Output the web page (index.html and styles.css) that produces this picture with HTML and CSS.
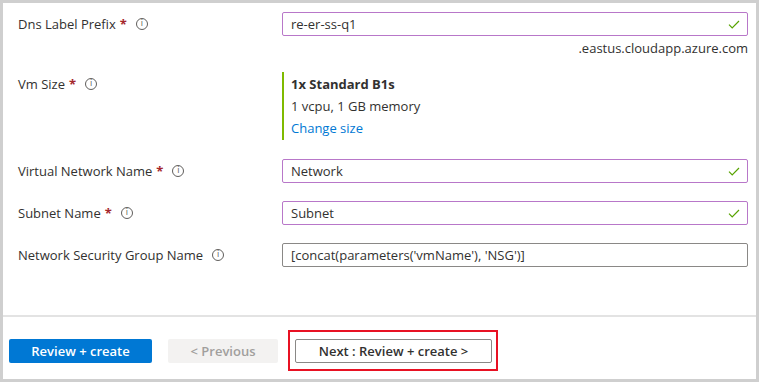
FILE: index.html
```html
<!DOCTYPE html>
<html lang="en">
<head>
<meta charset="utf-8">
<link rel="stylesheet" href="styles.css">
</head>
<body>
<div class="frame">
  <div class="form">
    <div class="row row-dns">
      <div class="label">Dns Label Prefix <span class="req">*</span> <span class="info">i</span></div>
      <div class="field">
        <div class="input valid">re-er-ss-q1<svg class="check" viewBox="0 0 12 9"><path d="M1 4.6 L4.2 7.8 L11 1" /></svg></div>
        <div class="suffix">.eastus.cloudapp.azure.com</div>
      </div>
    </div>
    <div class="row row-vm">
      <div class="label label-vm">Vm Size <span class="req">*</span> <span class="info">i</span></div>
      <div class="field">
        <div class="size">
          <div class="size-name">1x Standard B1s</div>
          <div class="size-desc">1 vcpu, 1 GB memory</div>
          <a class="size-link" href="#">Change size</a>
        </div>
      </div>
    </div>
    <div class="row row-vnet">
      <div class="label">Virtual Network Name <span class="req">*</span> <span class="info">i</span></div>
      <div class="field">
        <div class="input valid">Network<svg class="check" viewBox="0 0 12 9"><path d="M1 4.6 L4.2 7.8 L11 1" /></svg></div>
      </div>
    </div>
    <div class="row row-subnet">
      <div class="label">Subnet Name <span class="req">*</span> <span class="info">i</span></div>
      <div class="field">
        <div class="input valid">Subnet<svg class="check" viewBox="0 0 12 9"><path d="M1 4.6 L4.2 7.8 L11 1" /></svg></div>
      </div>
    </div>
    <div class="row row-nsg">
      <div class="label">Network Security Group Name <span class="info">i</span></div>
      <div class="field">
        <div class="input">[concat(parameters('vmName'), 'NSG')]</div>
      </div>
    </div>
  </div>
  <div class="footer">
    <button class="btn btn-primary">Review + create</button>
    <button class="btn btn-disabled">&lt; Previous</button>
    <div class="highlight">
      <button class="btn btn-default">Next : Review + create &gt;</button>
    </div>
  </div>
</div>
</body>
</html>
```
FILE: styles.css
```css
* { box-sizing: border-box; }
html, body { margin: 0; padding: 0; background: #ffffff; }
body {
  font-family: "Open Sans", "Noto Sans", sans-serif;
  font-size: 13px;
  color: #323130;
  width: 761px;
  height: 385px;
  overflow: hidden;
}
.frame {
  width: 759px;
  height: 382px;
  border: 3px solid #cfcfcf;
  background: #fff;
  display: flex;
  flex-direction: column;
}
.form {
  height: 314px;
  padding: 9px 8px 0 15px;
  border-bottom: 2px solid #e3e3e3;
}
.row {
  display: grid;
  grid-template-columns: 264px 1fr;
  align-items: start;
}
.row-vm { margin-top: 16px; }
.row-vnet { margin-top: 19px; }
.row-subnet, .row-nsg { margin-top: 18px; }
.label {
  line-height: 24px;
  white-space: nowrap;
  display: flex;
  align-items: center;
}
.label-vm { line-height: 22px; padding-top: 1px; }
.req { color: #a4262c; font-weight: 700; margin-left: 4px; }
.info {
  display: inline-flex;
  align-items: center;
  justify-content: center;
  width: 12px;
  height: 12px;
  border: 1px solid #605e5c;
  border-radius: 50%;
  font-size: 8px;
  line-height: 1;
  color: #605e5c;
  margin-left: 9px;
  font-family: "DejaVu Sans", sans-serif;
}
.input {
  height: 24px;
  border: 1px solid #8a8886;
  border-radius: 2px;
  padding: 0 8px;
  line-height: 22px;
  display: flex;
  align-items: center;
  justify-content: space-between;
  white-space: nowrap;
}
.input.valid { border-color: #b877c9; }
.check {
  width: 12px;
  height: 9px;
  fill: none;
  stroke: #57a300;
  stroke-width: 1.2;
  margin-right: -1px;
}
.suffix {
  text-align: right;
  line-height: 16px;
  margin-top: 4px;
  color: #323130;
}
.size {
  border-left: 2px solid #7fba00;
  padding: 1px 0 1px 7px;
  line-height: 22px;
}
.size-name { font-weight: 700; }
.size-link { color: #0078d4; text-decoration: none; }
.footer {
  flex: 1;
  display: flex;
  align-items: center;
  padding: 5px 0 0 6px;
}
.btn {
  font-family: inherit;
  font-size: 13px;
  font-weight: 600;
  height: 24px;
  border-radius: 2px;
  border: 1px solid transparent;
  padding: 0;
  line-height: 22px;
  cursor: pointer;
}
.btn-primary {
  width: 143px;
  background: #0078d4;
  color: #fff;
}
.btn-disabled {
  width: 110px;
  margin-left: 16px;
  background: #f3f2f1;
  color: #a19f9d;
}
.highlight {
  margin-left: 10px;
  border: 2px solid #e81123;
  padding: 7px 4px 6px 5px;
}
.btn-default {
  width: 197px;
  background: #fff;
  border-color: #8a8886;
  color: #323130;
}
```
